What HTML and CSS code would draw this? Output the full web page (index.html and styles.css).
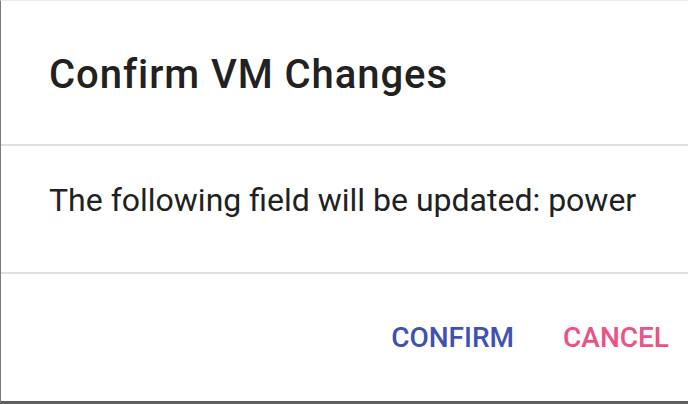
FILE: index.html
```html
<!DOCTYPE html>
<html lang="en">
  <head>
    <meta charset="UTF-8" />
    <meta name="viewport" content="width=device-width, initial-scale=1.0" />
    <title>Confirm VM Changes</title>
    <link rel="stylesheet" href="styles.css">
  </head>
  <body>
    <div class="dialog">
      <h2 class="dialog-title">Confirm VM Changes</h2>
      <div class="dialog-content">
        <p class="dialog-text">The following field will be updated: power</p>
      </div>
      <div class="dialog-actions">
        <button class="btn btn-primary" type="button">Confirm</button>
        <button class="btn btn-secondary" type="button">Cancel</button>
      </div>
    </div>
  </body>
</html>
```

FILE: styles.css
```css
* {
  margin: 0;
  padding: 0;
  box-sizing: border-box;
}
html,
body {
  width: 688px;
  height: 404px;
  overflow: hidden;
  background: #fff;
}
.dialog {
  width: 688px;
  height: 404px;
  display: flex;
  flex-direction: column;
  background: #fff;
  border-top: 1px solid #ececec;
  border-left: 1px solid #7a7a7a;
  border-bottom: 3px solid #5e5e5e;
  font-family: Roboto, "Liberation Sans", sans-serif;
  color: #212121;
}
.dialog-title {
  font-size: 40px;
  font-weight: 500;
  line-height: 64px;
  letter-spacing: 0.95px;
  white-space: nowrap;
  padding: 42px 48px 37px;
}
.dialog-content {
  border-top: 2px solid #e0e0e0;
  border-bottom: 2px solid #e0e0e0;
  padding: 30px 0 30px 48px;
}
.dialog-text {
  font-size: 32px;
  font-weight: 400;
  line-height: 48px;
  white-space: nowrap;
  margin-bottom: 18px;
}
.dialog-actions {
  flex: 1;
  display: flex;
  align-items: center;
  justify-content: flex-end;
  padding: 0 3px 0 16px;
}
.btn {
  font-family: Roboto, "Liberation Sans", sans-serif;
  font-size: 28px;
  font-weight: 500;
  line-height: 49px;
  text-transform: uppercase;
  background: none;
  border: 0;
  padding: 12px 16px;
  cursor: pointer;
}
.btn + .btn {
  margin-left: 17px;
}
.btn-primary {
  color: #3f51b5;
}
.btn-secondary {
  color: #ec5283;
}
```
